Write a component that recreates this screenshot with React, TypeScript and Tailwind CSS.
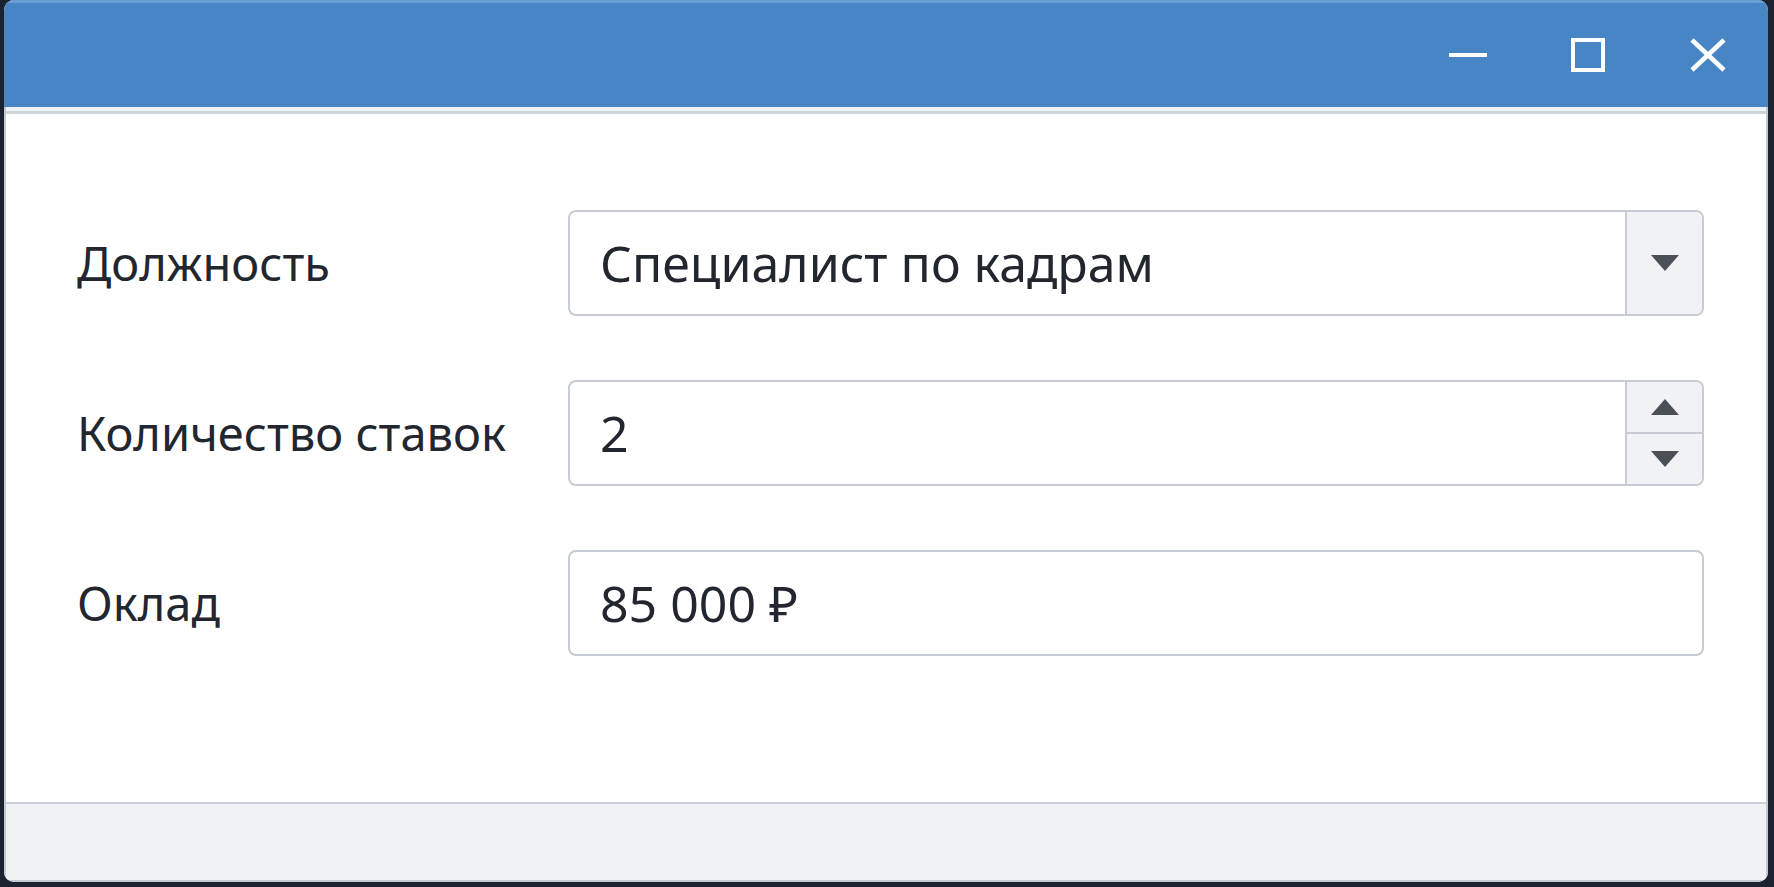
import type { ReactNode } from "react";

const font = { fontFamily: '"Noto Sans", "Open Sans", sans-serif' };

function TriangleDown() {
  return (
    <svg width="28" height="16" viewBox="0 0 28 16">
      <path d="M0 0 H28 L14 16 Z" fill="#4b5058" />
    </svg>
  );
}

function TriangleUp() {
  return (
    <svg width="28" height="16" viewBox="0 0 28 16">
      <path d="M0 16 H28 L14 0 Z" fill="#4b5058" />
    </svg>
  );
}

function Field({ children, addon }: { children: ReactNode; addon?: ReactNode }) {
  return (
    <div className="flex h-[106px] overflow-hidden rounded-[8px] border-2 border-[#c7cbd3] bg-white">
      <div className="flex flex-1 items-center px-[30px] text-[50px] text-[#22262e]">{children}</div>
      {addon}
    </div>
  );
}

function Row({ label, children }: { label: string; children: ReactNode }) {
  return (
    <>
      <div className="flex items-center text-[47px] text-[#22262e]">{label}</div>
      {children}
    </>
  );
}

export default function App() {
  return (
    <div className="h-[887px] w-full bg-[#1b2330] pr-[6px] pb-[5px] pl-[4px]" style={font}>
      <div className="flex h-full flex-col overflow-hidden rounded-[10px] bg-white">
        {/* заголовок окна */}
        <div className="flex h-[107px] items-center justify-end border-t-[3px] border-[#6a9fd4] bg-[#4885c5]">
          <button className="flex h-full w-[120px] items-center justify-center">
            <svg width="38" height="6" viewBox="0 0 38 6">
              <rect x="0" y="1" width="38" height="4" fill="#fff" />
            </svg>
          </button>
          <button className="flex h-full w-[120px] items-center justify-center">
            <svg width="34" height="34" viewBox="0 0 34 34">
              <rect x="2" y="2" width="30" height="30" fill="none" stroke="#fff" strokeWidth="4" />
            </svg>
          </button>
          <button className="flex h-full w-[120px] items-center justify-center">
            <svg width="36" height="34" viewBox="0 0 36 34">
              <path d="M2 2 L34 32 M34 2 L2 32" stroke="#fff" strokeWidth="4.5" />
            </svg>
          </button>
        </div>

        <div className="flex flex-1 flex-col border-x-2 border-b-2 border-[#c3c8d0]">
          <div className="h-[7px] border-b-[3px] border-[#cfd4db] bg-[#eef1f5]" />

          {/* форма */}
          <div className="flex-1 bg-white pt-[96px] pr-[62px] pl-[71px]">
            <div className="grid grid-cols-[491px_1fr] gap-y-[64px]">
              <Row label="Должность">
                <Field
                  addon={
                    <div className="flex w-[77px] items-center justify-center border-l-2 border-[#c7cbd3] bg-[#f1f2f5]">
                      <TriangleDown />
                    </div>
                  }
                >
                  Специалист по кадрам
                </Field>
              </Row>
              <Row label="Количество ставок">
                <Field
                  addon={
                    <div className="flex w-[77px] flex-col border-l-2 border-[#c7cbd3] bg-[#f1f2f5]">
                      <div className="flex flex-1 items-center justify-center border-b-2 border-[#c7cbd3]">
                        <TriangleUp />
                      </div>
                      <div className="flex flex-1 items-center justify-center">
                        <TriangleDown />
                      </div>
                    </div>
                  }
                >
                  2
                </Field>
              </Row>
              <Row label="Оклад">
                <Field>85 000 ₽</Field>
              </Row>
            </div>
          </div>

          {/* нижняя панель */}
          <div className="h-[78px] border-t-2 border-[#cbd0d8] bg-[#f1f2f5]" />
        </div>
      </div>
    </div>
  );
}
